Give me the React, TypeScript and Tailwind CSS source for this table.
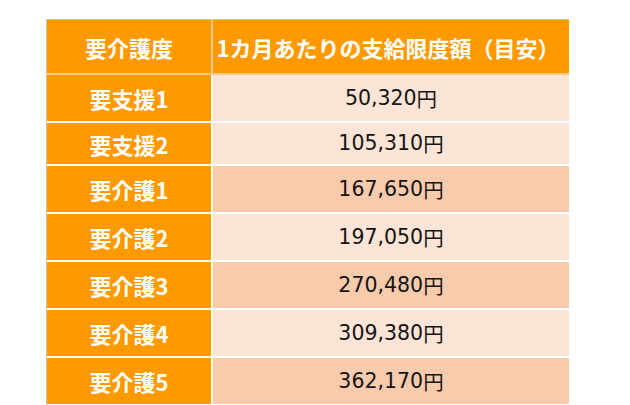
import React from "react";

const rows: { label: string; value: string; h: string; bg: string }[] = [
  { label: "要支援1", value: "50,320", h: "h-[46px]", bg: "bg-[#FCE4D6]" },
  { label: "要支援2", value: "105,310", h: "h-[41px]", bg: "bg-[#FCE4D6]" },
  { label: "要介護1", value: "167,650", h: "h-[46px]", bg: "bg-[#F8CBAD]" },
  { label: "要介護2", value: "197,050", h: "h-[46px]", bg: "bg-[#FCE4D6]" },
  { label: "要介護3", value: "270,480", h: "h-[46px]", bg: "bg-[#F8CBAD]" },
  { label: "要介護4", value: "309,380", h: "h-[46px]", bg: "bg-[#FCE4D6]" },
  { label: "要介護5", value: "362,170", h: "h-[46px]", bg: "bg-[#F8CBAD]" },
];

const jp = "font-['Noto_Sans_CJK_JP',sans-serif]";

export default function App() {
  return (
    <div className="w-[630px] h-[405px] overflow-hidden bg-white pt-[19px] pl-[46px]">
      <div className="w-[523px] border-l border-t border-[#c4c4c4]">
        <div className="flex h-[55px] border-b-2 border-[#FFC68A] bg-[#FF9900]">
          <div
            className={`w-[166px] border-r-2 border-[#FFC68A] flex items-center justify-center text-white font-bold text-[22px] leading-none ${jp}`}
          >
            要介護度
          </div>
          <div
            className={`flex-1 flex items-center justify-center pr-[6px] text-white font-bold text-[22px] leading-none whitespace-nowrap ${jp}`}
          >
            1カ月あたりの支給限度額（目安）
          </div>
        </div>
        {rows.map((r) => (
          <div key={r.label} className={`flex ${r.h} box-content border-b-2 border-white`}>
            <div
              className={`w-[166px] border-r-2 border-white bg-[#FF9900] flex items-center justify-center text-white font-bold text-[22px] leading-none ${jp}`}
            >
              {r.label}
            </div>
            <div
              className={`flex-1 ${r.bg} flex items-center justify-center text-[#151515] text-[20.5px] leading-none font-['DejaVu_Sans','Noto_Sans_CJK_JP',sans-serif]`}
            >
              {r.value}
              <span className={jp}>円</span>
            </div>
          </div>
        ))}
      </div>
    </div>
  );
}
